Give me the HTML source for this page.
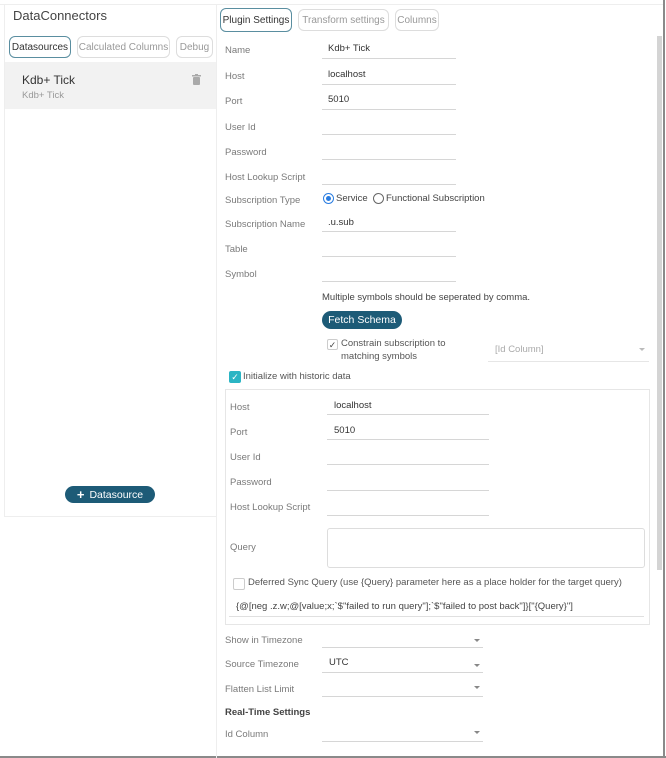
<!DOCTYPE html>
<html><head><meta charset="utf-8"><style>
*{box-sizing:border-box;margin:0;padding:0}
body{width:666px;height:758px;background:#fff;font-family:"Liberation Sans",sans-serif;font-size:9.5px;color:#777;position:relative;overflow:hidden}
.a{position:absolute;white-space:nowrap}
.lbl{position:absolute;white-space:nowrap;color:#7a7a7a;font-size:9.5px;line-height:12px}
.val{position:absolute;white-space:nowrap;color:#333;font-size:9.5px;line-height:12px}
.ul{position:absolute;height:1px;background:#d6d6d6}
.tab{position:absolute;border:1px solid #ddd;border-radius:6px;color:#999;font-size:10px;display:flex;align-items:center;justify-content:center;height:22px}
.tab.sel{border:1.5px solid #5a8ea0;color:#333}
.btn{position:absolute;border-radius:9px;background:#1d5b77;color:#fff;font-size:10px;display:flex;align-items:center;justify-content:center}
.dd{position:absolute;width:0;height:0;border-left:3.5px solid transparent;border-right:3.5px solid transparent;border-top:3.5px solid #888}
</style></head><body>
<div class="a" style="left:0;top:756px;width:666px;height:2px;background:#8a8a8a"></div>
<div class="a" style="left:663px;top:0;width:2px;height:758px;background:#8a8a8a"></div>
<div class="a" style="left:0;top:4px;width:663px;height:1px;background:#eee"></div>
<div class="a" style="left:657px;top:36px;width:5px;height:534px;background:#d4d4d4"></div>

<div class="a" style="left:4px;top:4px;width:213px;height:513px;border:1px solid #eee;border-top:none"></div>
<div class="a" style="left:13px;top:8px;font-size:13px;color:#444">DataConnectors</div>
<div class="tab sel" style="left:9px;top:36px;width:62px">Datasources</div>
<div class="tab" style="left:77px;top:36px;width:93px">Calculated Columns</div>
<div class="tab" style="left:176px;top:36px;width:37px">Debug</div>
<div class="a" style="left:5px;top:62px;width:211px;height:47px;background:#f2f2f2"></div>
<div class="a" style="left:22px;top:73px;font-size:12px;color:#333">Kdb+ Tick</div>
<div class="a" style="left:22px;top:90px;font-size:9.5px;color:#999">Kdb+ Tick</div>
<svg class="a" style="left:192px;top:74px" width="9" height="11" viewBox="0 0 9 11"><rect x="0" y="1" width="9" height="1.5" fill="#aaa"/><rect x="3" y="0" width="3" height="1.5" fill="#aaa"/><rect x="1" y="3" width="7" height="8" rx="1" fill="#aaa"/></svg>
<div class="btn" style="left:65px;top:486px;width:90px;height:17px;font-size:10.5px"><b style="font-size:13px;margin-right:5px">+</b>Datasource</div>
<div class="a" style="left:216px;top:4px;width:1px;height:754px;background:#eee"></div>

<div class="tab sel" style="left:220px;top:8px;width:72px;height:24px">Plugin Settings</div>
<div class="tab" style="left:298px;top:9px;width:91px">Transform settings</div>
<div class="tab" style="left:395px;top:9px;width:44px">Columns</div>

<div class="lbl" style="left:225px;top:45px">Name</div><div class="val" style="left:328px;top:43px">Kdb+ Tick</div><div class="ul" style="left:322px;top:58px;width:134px"></div>
<div class="lbl" style="left:225px;top:71px">Host</div><div class="val" style="left:328px;top:69px">localhost</div><div class="ul" style="left:322px;top:84px;width:134px"></div>
<div class="lbl" style="left:225px;top:96px">Port</div><div class="val" style="left:328px;top:94px">5010</div><div class="ul" style="left:322px;top:109px;width:134px"></div>
<div class="lbl" style="left:225px;top:122px">User Id</div><div class="ul" style="left:322px;top:134px;width:134px"></div>
<div class="lbl" style="left:225px;top:147px">Password</div><div class="ul" style="left:322px;top:159px;width:134px"></div>
<div class="lbl" style="left:225px;top:172px">Host Lookup Script</div><div class="ul" style="left:322px;top:184px;width:134px"></div>
<div class="lbl" style="left:225px;top:195px">Subscription Type</div>
<div class="a" style="left:323px;top:193px;width:11px;height:11px;border-radius:50%;border:1.5px solid #2a7de1"><div style="margin:1.5px;width:5px;height:5px;border-radius:50%;background:#2a7de1"></div></div>
<div class="val" style="left:336px;top:193px;color:#444">Service</div>
<div class="a" style="left:373px;top:193px;width:11px;height:11px;border-radius:50%;border:1px solid #666"></div>
<div class="val" style="left:386px;top:193px;color:#444">Functional Subscription</div>
<div class="lbl" style="left:225px;top:219px">Subscription Name</div><div class="val" style="left:328px;top:217px">.u.sub</div><div class="ul" style="left:322px;top:231px;width:134px"></div>
<div class="lbl" style="left:225px;top:244px">Table</div><div class="ul" style="left:322px;top:256px;width:134px"></div>
<div class="lbl" style="left:225px;top:269px">Symbol</div><div class="ul" style="left:322px;top:281px;width:134px"></div>
<div class="val" style="left:322px;top:292px;color:#444">Multiple symbols should be seperated by comma.</div>
<div class="btn" style="left:322px;top:311px;width:80px;height:18px;font-size:10.5px">Fetch Schema</div>
<div class="a" style="left:327px;top:339px;width:11px;height:11px;border:1px solid #ccc;border-radius:2px;color:#444;font-size:9px;line-height:10px;text-align:center">✓</div>
<div class="val" style="left:341px;top:338px;color:#555;line-height:12.5px">Constrain subscription to<br>matching symbols</div>
<div class="lbl" style="left:495px;top:344px;color:#aaa">[Id Column]</div><div class="dd" style="left:639px;top:348px;border-top-color:#bbb"></div><div class="ul" style="left:488px;top:361px;width:161px;background:#e6e6e6"></div>
<div class="a" style="left:229px;top:371px;width:12px;height:12px;background:#2bb5c4;border-radius:2px;color:#fff;font-size:9px;line-height:12px;text-align:center">✓</div>
<div class="val" style="left:243px;top:371px;color:#555">Initialize with historic data</div>

<div class="a" style="left:225px;top:389px;width:425px;height:236px;border:1px solid #e6e6e6"></div>
<div class="lbl" style="left:230px;top:402px">Host</div><div class="val" style="left:334px;top:400px">localhost</div><div class="ul" style="left:327px;top:414px;width:162px"></div>
<div class="lbl" style="left:230px;top:427px">Port</div><div class="val" style="left:334px;top:425px">5010</div><div class="ul" style="left:327px;top:439px;width:162px"></div>
<div class="lbl" style="left:230px;top:452px">User Id</div><div class="ul" style="left:327px;top:464px;width:162px"></div>
<div class="lbl" style="left:230px;top:477px">Password</div><div class="ul" style="left:327px;top:490px;width:162px"></div>
<div class="lbl" style="left:230px;top:502px">Host Lookup Script</div><div class="ul" style="left:327px;top:515px;width:162px"></div>
<div class="lbl" style="left:230px;top:542px">Query</div>
<div class="a" style="left:327px;top:528px;width:318px;height:40px;border:1px solid #ddd;border-radius:3px"></div>
<div class="a" style="left:233px;top:578px;width:12px;height:12px;border:1px solid #ccc;border-radius:2px"></div>
<div class="val" style="left:248px;top:577px;color:#555">Deferred Sync Query (use {Query} parameter here as a place holder for the target query)</div>
<div class="val" style="left:236px;top:601px;color:#444">{@[neg .z.w;@[value;x;`$"failed to run query"];`$"failed to post back"]}["{Query}"]</div>
<div class="ul" style="left:229px;top:616px;width:415px;background:#e0e0e0"></div>

<div class="lbl" style="left:225px;top:635px">Show in Timezone</div><div class="dd" style="left:474px;top:639px"></div><div class="ul" style="left:322px;top:647px;width:161px"></div>
<div class="lbl" style="left:225px;top:659px">Source Timezone</div><div class="val" style="left:329px;top:657px">UTC</div><div class="dd" style="left:474px;top:664px"></div><div class="ul" style="left:322px;top:672px;width:161px"></div>
<div class="lbl" style="left:225px;top:684px">Flatten List Limit</div><div class="dd" style="left:474px;top:686px"></div><div class="ul" style="left:322px;top:696px;width:161px"></div>
<div class="lbl" style="left:225px;top:707px;color:#444;font-weight:bold">Real-Time Settings</div>
<div class="lbl" style="left:225px;top:729px">Id Column</div><div class="dd" style="left:474px;top:731px"></div><div class="ul" style="left:322px;top:741px;width:161px"></div>
</body></html>
